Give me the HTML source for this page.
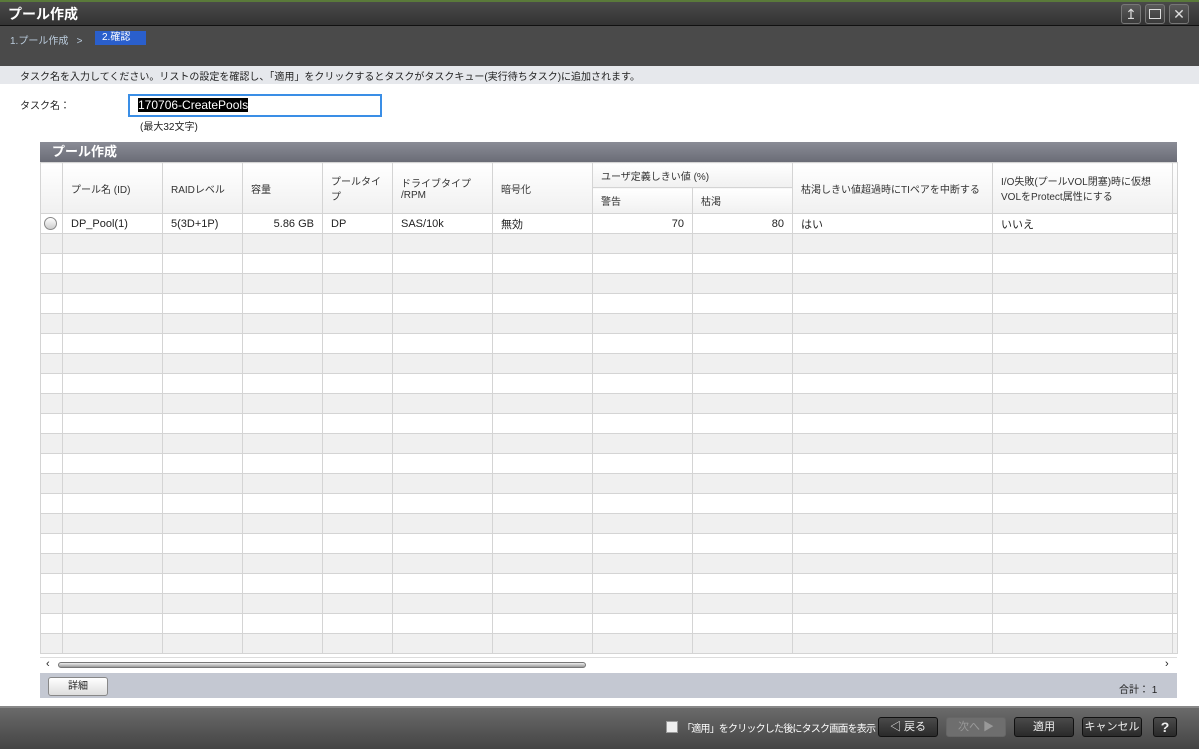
<!DOCTYPE html><html><head><meta charset="utf-8"><style>
*{box-sizing:border-box;margin:0;padding:0}
body{width:1199px;height:749px;overflow:hidden;background:#fff;font-family:"Liberation Sans","Noto Sans CJK JP",sans-serif;font-size:11px;color:#222;position:relative}
.abs{position:absolute}
.title{left:0;top:0;width:1199px;height:26px;background:linear-gradient(#4a4a4a,#333);border-top:2px solid #5a7a3a;border-bottom:1px solid #111;color:#fff;font-weight:bold;font-size:14px;padding:2px 8px;line-height:20px}
.steps{left:0;top:26px;width:1199px;height:40px;background:#4a4a4a}
.wb{width:20px;height:20px;top:4px;border:1px solid #777;border-radius:3px;background:linear-gradient(#5a5a5a,#3a3a3a);color:#ddd;text-align:center;font-size:14px;line-height:18px}
.instr{left:0;top:66px;width:1199px;height:18px;background:#e6e8ec;padding:2px 20px;font-size:10px}
table{border-collapse:collapse;table-layout:fixed;position:absolute;left:40px;top:162px;width:1137px}
td{border:1px solid #d4d4d4;height:20px;padding:0 8px;white-space:nowrap;overflow:hidden;font-size:11px}
th{border:1px solid #d4d4d4;background:linear-gradient(#fff,#f0f0f0);font-weight:normal;text-align:left;padding:0 8px;font-size:10px;color:#333;vertical-align:middle;white-space:nowrap;overflow:hidden}
tr.o td{background:#f0f0f0}
.btn{top:717px;height:20px;border:1px solid #111;border-radius:3px;background:linear-gradient(#4a4a4a,#2a2a2a);color:#eee;text-align:center;line-height:18px;font-size:11px}
</style></head><body>
<div class="abs title">プール作成</div>
<div class="abs wb" style="left:1121px">&#8613;</div>
<div class="abs wb" style="left:1145px"><div style="width:12px;height:10px;border:1.5px solid #ddd;margin:4px auto"></div></div>
<div class="abs wb" style="left:1169px">✕</div>
<div class="abs steps"></div>
<div class="abs" style="left:10px;top:32px;color:#bcd;font-size:10px">1.プール作成 &nbsp;&nbsp;&gt;</div>
<div class="abs" style="left:95px;top:31px;width:51px;height:14px;background:#2a5fcc;color:#fff;font-size:10px;padding:1px 7px;line-height:12px">2.確認</div>
<div class="abs instr">タスク名を入力してください。リストの設定を確認し、「適用」をクリックするとタスクがタスクキュー(実行待ちタスク)に追加されます。</div>
<div class="abs" style="left:20px;top:97px;font-size:10px">タスク名：</div>
<div class="abs" style="left:128px;top:94px;width:254px;height:23px;border:2px solid #3a8ee6;padding:2px 8px"><span style="background:#000;color:#fff;font-size:12px">170706-CreatePools</span></div>
<div class="abs" style="left:140px;top:118px;font-size:10px">(最大32文字)</div>
<div class="abs" style="left:40px;top:142px;width:1137px;height:20px;background:linear-gradient(#8a8c96,#6a6c76);color:#fff;font-weight:bold;font-size:13px;padding:0 12px;line-height:20px">プール作成</div>
<table>
<colgroup><col style="width:22px"><col style="width:100px"><col style="width:80px"><col style="width:80px"><col style="width:70px"><col style="width:100px"><col style="width:100px"><col style="width:100px"><col style="width:100px"><col style="width:200px"><col style="width:180px"><col style="width:5px"></colgroup>
<tr style="height:25px"><th rowspan="2"></th><th rowspan="2">プール名 (ID)</th><th rowspan="2">RAIDレベル</th><th rowspan="2">容量</th><th rowspan="2">プールタイ<br>プ</th><th rowspan="2">ドライブタイプ<br>/RPM</th><th rowspan="2">暗号化</th><th colspan="2">ユーザ定義しきい値 (%)</th><th rowspan="2">枯渇しきい値超過時にTIペアを中断する</th><th rowspan="2">I/O失敗(プールVOL閉塞)時に仮想<br>VOLをProtect属性にする</th><th rowspan="2"></th></tr>
<tr style="height:26px"><th>警告</th><th>枯渇</th></tr>
<tr><td style="padding:0 3px"><div style="width:13px;height:13px;border:1px solid #888;border-radius:50%;background:linear-gradient(#fff,#ccc)"></div></td><td>DP_Pool(1)</td><td>5(3D+1P)</td><td style="text-align:right">5.86 GB</td><td>DP</td><td>SAS/10k</td><td>無効</td><td style="text-align:right">70</td><td style="text-align:right">80</td><td>はい</td><td>いいえ</td><td></td></tr>
<tr class="o"><td></td><td></td><td></td><td></td><td></td><td></td><td></td><td></td><td></td><td></td><td></td><td></td></tr>
<tr><td></td><td></td><td></td><td></td><td></td><td></td><td></td><td></td><td></td><td></td><td></td><td></td></tr>
<tr class="o"><td></td><td></td><td></td><td></td><td></td><td></td><td></td><td></td><td></td><td></td><td></td><td></td></tr>
<tr><td></td><td></td><td></td><td></td><td></td><td></td><td></td><td></td><td></td><td></td><td></td><td></td></tr>
<tr class="o"><td></td><td></td><td></td><td></td><td></td><td></td><td></td><td></td><td></td><td></td><td></td><td></td></tr>
<tr><td></td><td></td><td></td><td></td><td></td><td></td><td></td><td></td><td></td><td></td><td></td><td></td></tr>
<tr class="o"><td></td><td></td><td></td><td></td><td></td><td></td><td></td><td></td><td></td><td></td><td></td><td></td></tr>
<tr><td></td><td></td><td></td><td></td><td></td><td></td><td></td><td></td><td></td><td></td><td></td><td></td></tr>
<tr class="o"><td></td><td></td><td></td><td></td><td></td><td></td><td></td><td></td><td></td><td></td><td></td><td></td></tr>
<tr><td></td><td></td><td></td><td></td><td></td><td></td><td></td><td></td><td></td><td></td><td></td><td></td></tr>
<tr class="o"><td></td><td></td><td></td><td></td><td></td><td></td><td></td><td></td><td></td><td></td><td></td><td></td></tr>
<tr><td></td><td></td><td></td><td></td><td></td><td></td><td></td><td></td><td></td><td></td><td></td><td></td></tr>
<tr class="o"><td></td><td></td><td></td><td></td><td></td><td></td><td></td><td></td><td></td><td></td><td></td><td></td></tr>
<tr><td></td><td></td><td></td><td></td><td></td><td></td><td></td><td></td><td></td><td></td><td></td><td></td></tr>
<tr class="o"><td></td><td></td><td></td><td></td><td></td><td></td><td></td><td></td><td></td><td></td><td></td><td></td></tr>
<tr><td></td><td></td><td></td><td></td><td></td><td></td><td></td><td></td><td></td><td></td><td></td><td></td></tr>
<tr class="o"><td></td><td></td><td></td><td></td><td></td><td></td><td></td><td></td><td></td><td></td><td></td><td></td></tr>
<tr><td></td><td></td><td></td><td></td><td></td><td></td><td></td><td></td><td></td><td></td><td></td><td></td></tr>
<tr class="o"><td></td><td></td><td></td><td></td><td></td><td></td><td></td><td></td><td></td><td></td><td></td><td></td></tr>
<tr><td></td><td></td><td></td><td></td><td></td><td></td><td></td><td></td><td></td><td></td><td></td><td></td></tr>
<tr class="o"><td style="height:6px"></td><td></td><td></td><td></td><td></td><td></td><td></td><td></td><td></td><td></td><td></td><td></td></tr>
</table>
<div class="abs" style="left:40px;top:657px;width:1137px;height:16px;background:#fff;border-top:1px solid #ddd"></div>
<div class="abs" style="left:46px;top:658px;font-size:11px">‹</div>
<div class="abs" style="left:1165px;top:658px;font-size:11px">›</div>
<div class="abs" style="left:58px;top:662px;width:528px;height:6px;border:1px solid #777;border-radius:3px;background:linear-gradient(#eee,#999)"></div>
<div class="abs" style="left:40px;top:673px;width:1137px;height:25px;background:#c4c8d2"></div>
<div class="abs" style="left:48px;top:677px;width:60px;height:19px;border:1px solid #888;border-radius:3px;background:linear-gradient(#fff,#ddd);text-align:center;line-height:17px;font-size:10px">詳細</div>
<div class="abs" style="left:1119px;top:681px;font-size:10px">合計： 1</div>
<div class="abs" style="left:0;top:706px;width:1199px;height:43px;background:linear-gradient(#6a6a6a,#444);border-top:2px solid #888"></div>
<div class="abs" style="left:666px;top:721px;width:12px;height:12px;background:#eee;border:1px solid #999"></div>
<div class="abs" style="left:682px;top:720px;color:#fff;font-size:10px;letter-spacing:-0.8px;white-space:nowrap">「適用」をクリックした後にタスク画面を表示</div>
<div class="btn abs" style="left:878px;width:60px">◁ 戻る</div>
<div class="btn abs" style="left:946px;width:60px;background:#6e6e6e;border-color:#666;color:#999">次へ ▶</div>
<div class="btn abs" style="left:1014px;width:60px">適用</div>
<div class="btn abs" style="left:1082px;width:60px">キャンセル</div>
<div class="btn abs" style="left:1153px;width:24px;font-weight:bold;font-size:14px">?</div>
</body></html>
